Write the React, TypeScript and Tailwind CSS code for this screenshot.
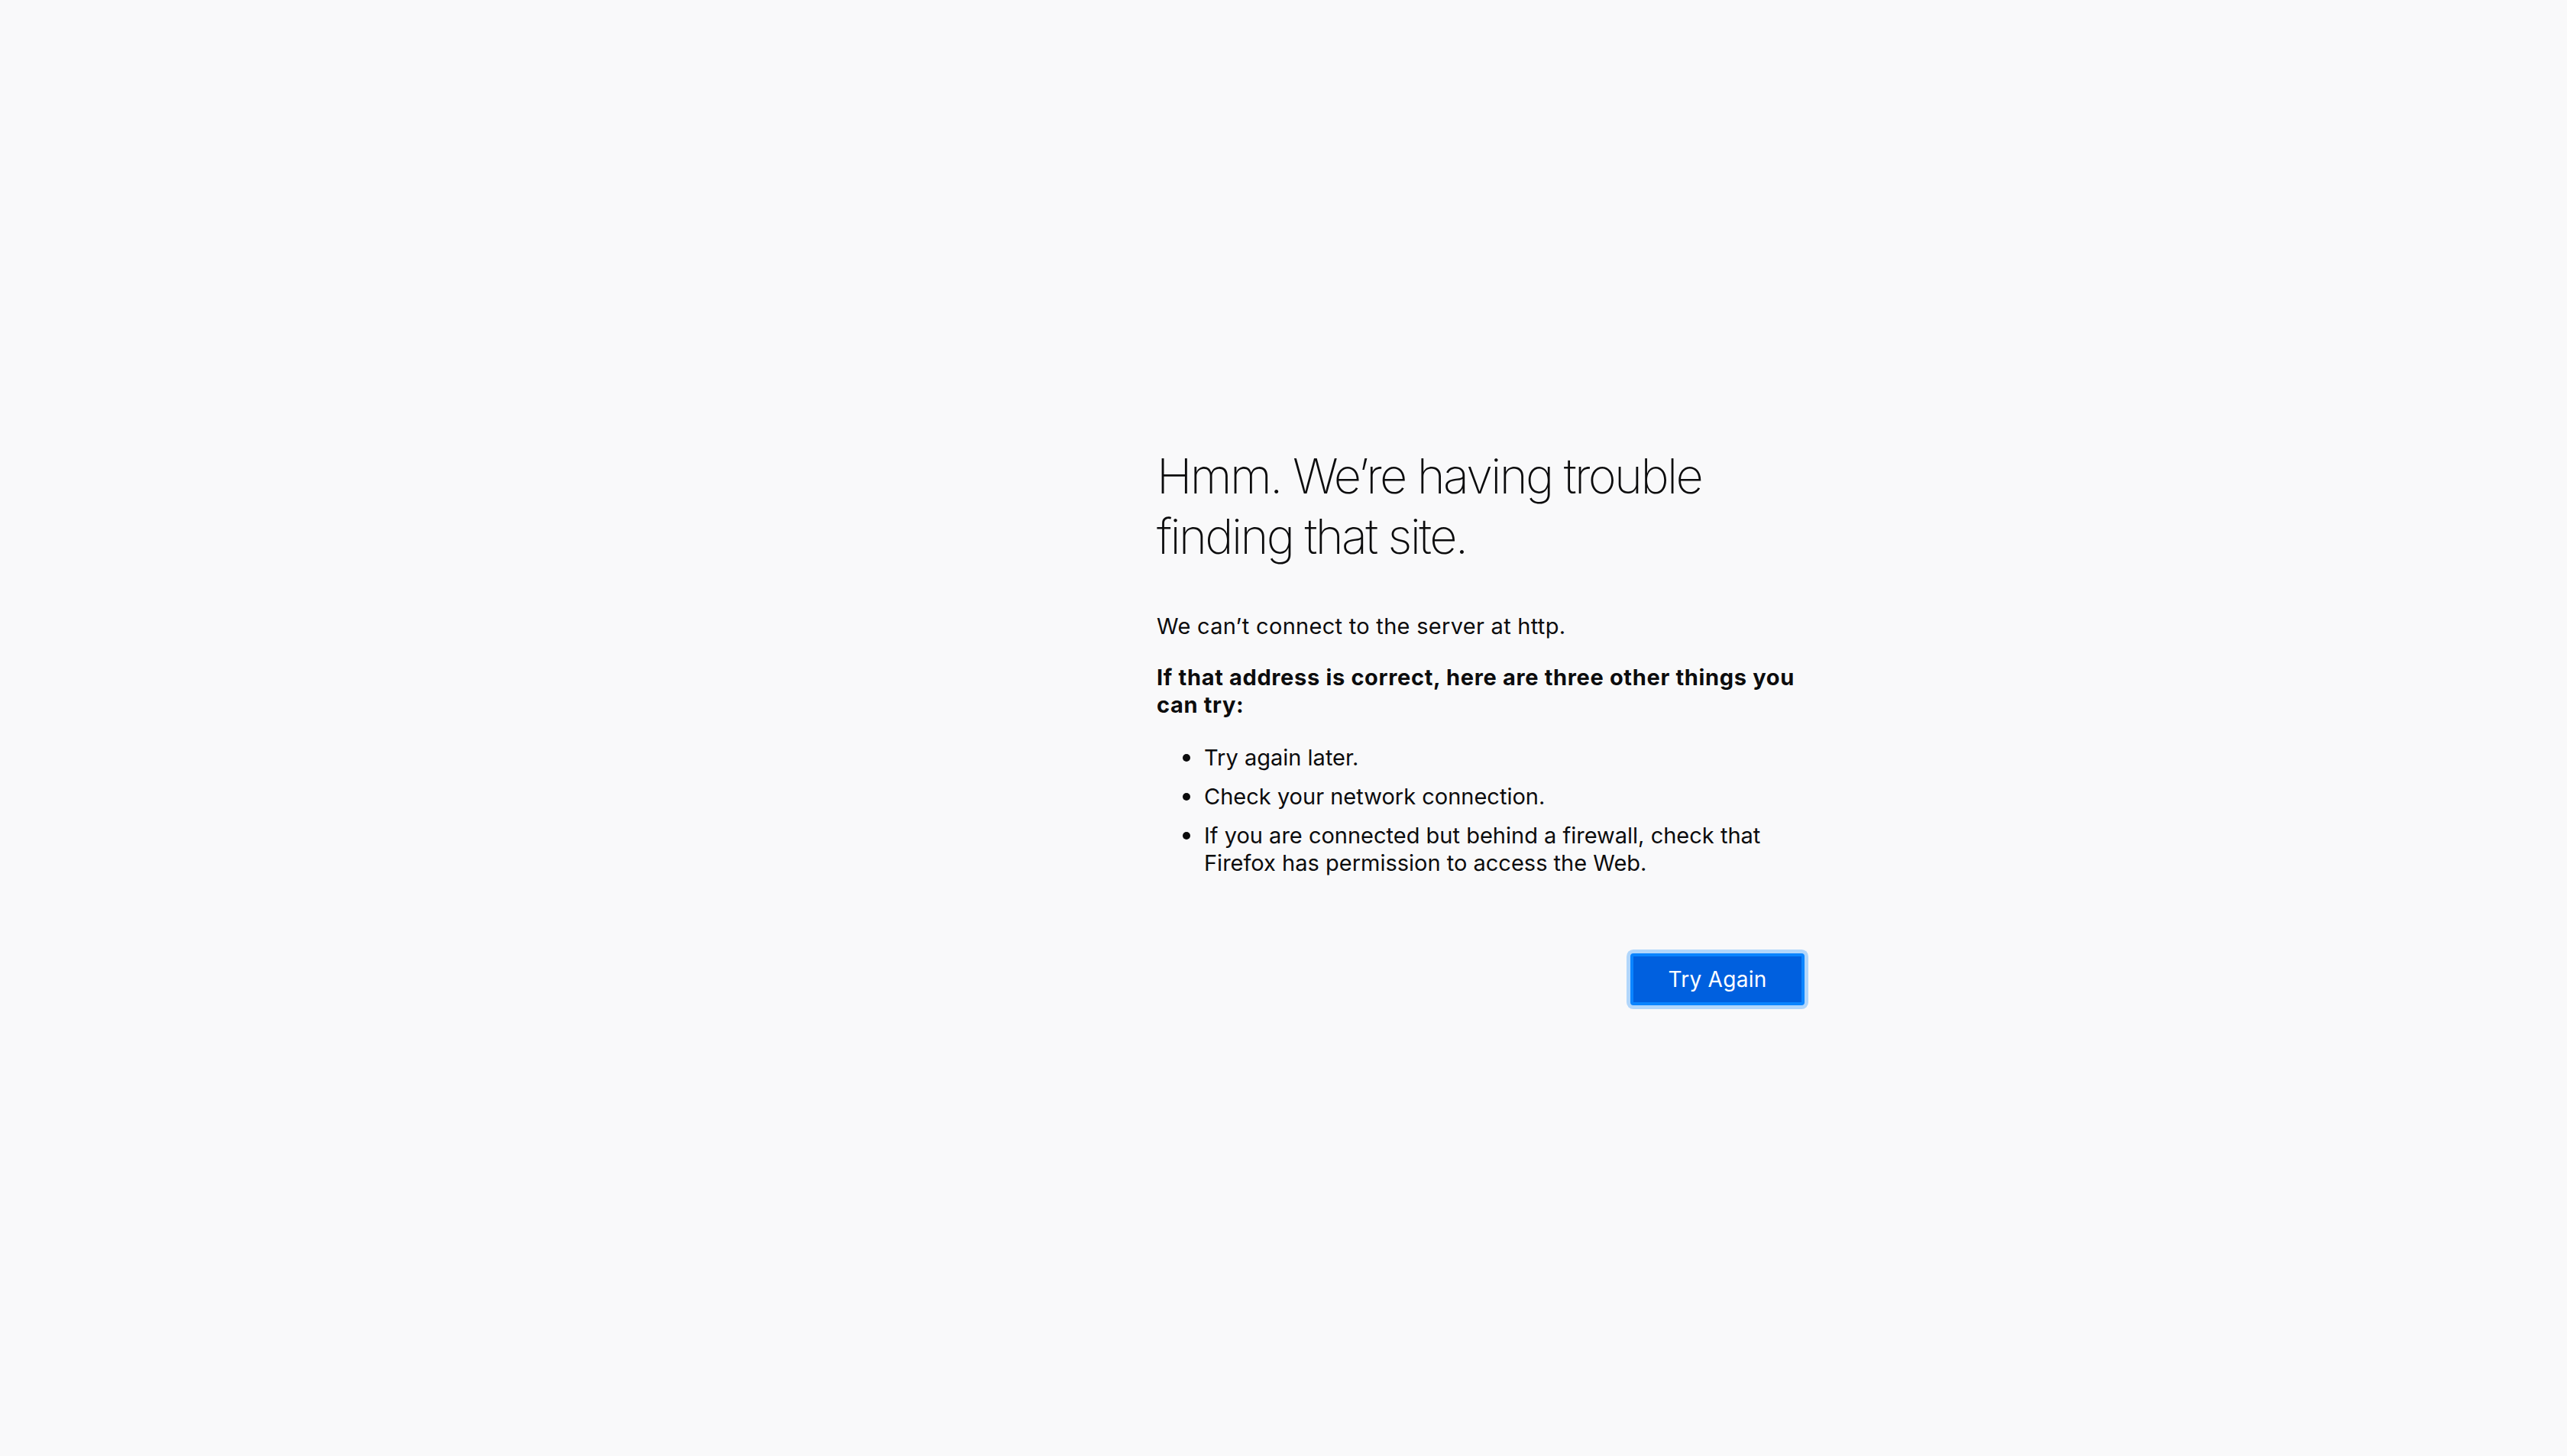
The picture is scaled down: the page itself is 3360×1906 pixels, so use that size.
import React from 'react';

const tips = [
  'Try again later.',
  'Check your network connection.',
  'If you are connected but behind a firewall, check that Firefox has permission to access the Web.',
];

function App() {
  return (
    <div
      className="min-h-screen w-full bg-[#f9f9fa] text-[#0c0c0d]"
      style={{ fontFamily: 'Inter, "Noto Sans", sans-serif' }}
    >
      <div className="flex justify-center pt-[584px]">
        <div className="w-[1364px] pl-[516px]">
          <div className="w-[848px]">
            <h1 className="text-[63px] leading-[79px] font-extralight tracking-[-0.042em]">
              Hmm. We’re having trouble finding that site.
            </h1>
            <p className="mt-[60px] text-[29px] leading-[36px] tracking-[0.01em]">
              We can’t connect to the server at http.
            </p>
            <p className="mt-[31px] text-[29px] leading-[36px] font-bold tracking-[0.023em]">
              If that address is correct, here are three other things you can try:
            </p>
            <ul className="mt-[33px] flex flex-col gap-[15px] text-[29px] leading-[36px]">
              {tips.map((tip) => (
                <li key={tip} className="flex">
                  <span className="flex w-[62px] shrink-0 h-[36px] items-center pl-[34px]">
                    <span className="w-[10px] h-[10px] rounded-full bg-[#0c0c0d]" />
                  </span>
                  <span>{tip}</span>
                </li>
              ))}
            </ul>
            <div className="mt-[100px] flex justify-end">
              <button className="w-[228px] h-[68px] rounded-[4px] border-4 border-[#0a84ff] bg-[#0060df] text-white text-[28px] tracking-[0.01em] shadow-[0_0_0_5px_#b1d6fb]">
                Try Again
              </button>
            </div>
          </div>
        </div>
      </div>
    </div>
  );
}

export default App;
